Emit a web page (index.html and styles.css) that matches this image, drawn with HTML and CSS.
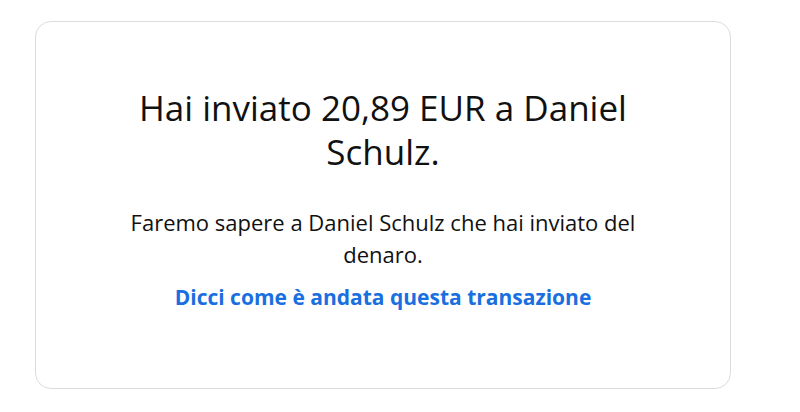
FILE: index.html
```html
<!DOCTYPE html>
<html>
  <head>
    <meta charset="UTF-8" />
    <title>Pagamento inviato</title>
    <link rel="stylesheet" href="styles.css">
  </head>

  <body>
    <div class="confirm-card">
      <h1 class="confirm-title">Hai inviato 20,89 EUR a Daniel Schulz.</h1>
      <p class="confirm-text">Faremo sapere a Daniel Schulz che hai inviato del denaro.</p>
      <a class="confirm-link" href="#">Dicci come è andata questa transazione</a>
    </div>
  </body>
</html>
```

FILE: styles.css
```css
body {
  font-family: "Open Sans", Arial, sans-serif;
  margin: 0;
  padding: 21px 0 0 35px;
  background: #fff;
  color: #111;
}

.confirm-card {
  width: 696px;
  height: 368px;
  box-sizing: border-box;
  border: 1px solid #dcdcdc;
  border-radius: 16px;
  display: flex;
  flex-direction: column;
  align-items: center;
  padding: 64px 60px 0;
  text-align: center;
}

.confirm-title {
  font-size: 35px;
  font-weight: 400;
  line-height: 44px;
  margin: 0;
  max-width: 520px;
}

.confirm-text {
  font-size: 22px;
  line-height: 32px;
  margin: 32px 0 0;
  max-width: 530px;
}

.confirm-link {
  font-size: 21px;
  font-weight: 700;
  line-height: 29px;
  color: #1a6fdf;
  text-decoration: none;
  margin-top: 13px;
}
```
